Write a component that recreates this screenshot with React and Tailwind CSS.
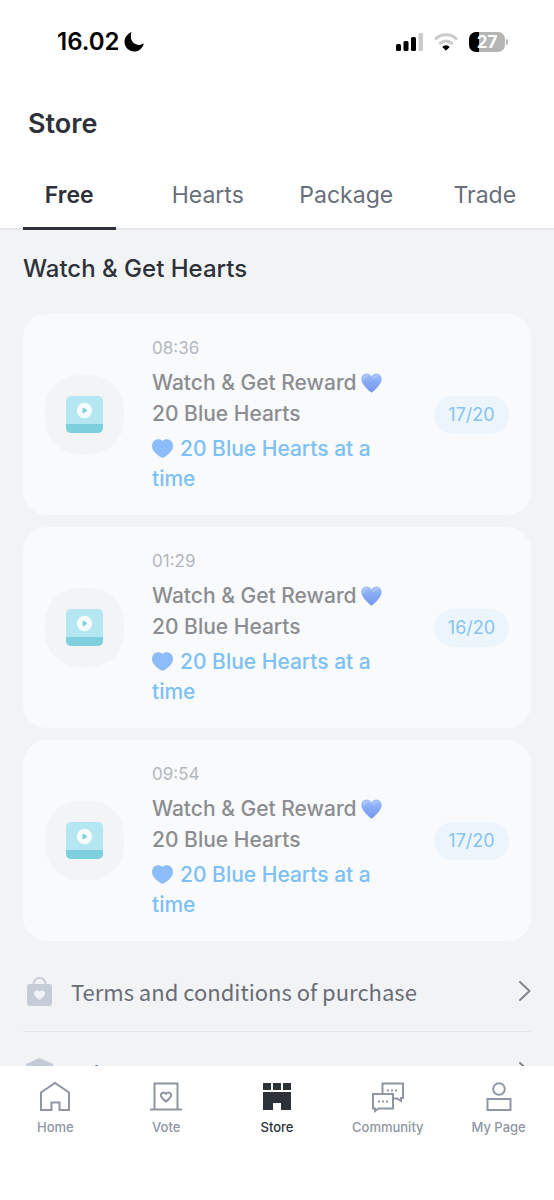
import { useState } from "react"

const TABS = ["Free", "Hearts", "Package", "Trade"]

const REWARDS = [
  { id: 1, time: "08:36", count: "17/20" },
  { id: 2, time: "01:29", count: "16/20" },
  { id: 3, time: "09:54", count: "17/20" },
]

const StatusBar = () => (
  <div className="flex items-center justify-between pt-7 pr-[46px] pl-[57px]">
    <div className="flex items-center gap-1">
      <span className="text-[24px] leading-[28px] font-semibold text-black">16.02</span>
      <svg width="20" height="20" viewBox="0 0 20 20" fill="#000">
        <path d="M7.3.4C6 5.2 7.3 9.600 10.800 11.800c2.600 1.600 5.600 1.500 8-.1.500-.300 1 .100.800.700C18.200 16.500 14.600 19.500 10.300 19.500 4.900 19.500.5 15.200.5 9.800.5 5.700 3 2.200 6.500.400 7-.100 7.500-.100 7.300.400Z" />
      </svg>
    </div>
    <div className="flex items-center gap-[11px]">
      <svg width="27" height="18" viewBox="0 0 27 18">
        <rect x="0" y="11" width="5" height="7" rx="1.500" fill="#000" />
        <rect x="7.500" y="8" width="5" height="10" rx="1.500" fill="#000" />
        <rect x="15" y="4" width="5" height="14" rx="1.500" fill="#000" />
        <rect x="22.500" y="0" width="4.500" height="18" rx="1.500" fill="#cbcbcb" />
      </svg>
      <svg width="24" height="18" viewBox="0 0 24 18" fill="none">
        <path d="M2 5.600C7.500.600 16.500.600 22 5.600" stroke="#cbcbcb" strokeWidth="3" strokeLinecap="round" />
        <path d="M6.300 10.200c3.300-3 8.100-3 11.400 0" stroke="#cbcbcb" strokeWidth="3" strokeLinecap="round" />
        <path d="M8.800 14c1.800-1.600 4.600-1.600 6.400 0L12 17.200Z" fill="#000" stroke="#000" strokeLinejoin="round" />
      </svg>
      <div className="flex items-center gap-px">
        <div className="flex h-5 w-9 items-center justify-center rounded-[7px] bg-linear-to-r from-black from-27% to-[#b5b5b5] to-27% text-[17px] leading-5 font-bold text-white">
          27
        </div>
        <div className="h-[6px] w-[2px] rounded-r bg-[#b5b5b5]" />
      </div>
    </div>
  </div>
)

const VideoIcon = () => (
  <svg width="37" height="37" viewBox="0 0 37 37">
    <rect width="37" height="37" rx="5" fill="#b4e7f1" />
    <path d="M0 28h37v4a5 5 0 0 1-5 5H5a5 5 0 0 1-5-5Z" fill="#7fd0de" />
    <circle cx="18.500" cy="14.500" r="7.700" fill="#f6fbfc" />
    <path d="M17 12v5l4-2.500Z" fill="#7fd0de" stroke="#7fd0de" strokeLinejoin="round" />
  </svg>
)

// glossy heart that ends the reward title
const GlossyHeart = () => (
  <svg className="ml-1 inline-block align-[-3px]" width="21" height="20" viewBox="0 0 21 20">
    <defs>
      <linearGradient id="gloss" x1="0" y1="0" x2="0" y2="1">
        <stop offset="0" stopColor="#a2bffa" />
        <stop offset="0.450" stopColor="#86aaf6" />
        <stop offset="1" stopColor="#7598ee" />
      </linearGradient>
    </defs>
    <path
      d="M10.500 3.800C9 .600 5.700-.200 3.300 1 .500 2.400-.300 5.800 1 8.900c1.700 4 5.700 7.800 9.500 10.900 3.800-3.100 7.800-6.900 9.500-10.900 1.300-3.100.500-6.500-2.300-7.900-2.400-1.200-5.700-.400-7.200 2.800Z"
      fill="url(#gloss)"
    />
    <path d="M2.600 6.500c0-2.600 1.800-4 4-3.700M12.600 5.300c.800-2 2.300-2.800 4.200-2.300" stroke="#b3cbfc" strokeWidth="1.500" fill="none" strokeLinecap="round" />
  </svg>
)

const FlatHeart = () => (
  <svg className="mr-[7px] inline-block align-[-2px]" width="21" height="19" viewBox="0 0 21 19">
    <path
      d="M10.500 1.900C8.600-.300 4.700-.500 2.200 1.700-.400 4-.600 8.600 1.400 11.600c1.700 2.500 4.200 4.700 7 6.500 1.400.900 2.800.900 4.200 0 2.800-1.800 5.300-4 7-6.500 2-3 1.800-7.600-.8-9.900C16.300-.500 12.400-.300 10.500 1.900Z"
      fill="#8cbcf9"
    />
  </svg>
)

const RewardCard = ({ time, count }) => (
  <li className="flex items-center rounded-[24px] bg-[#f9fafb] px-[22px] py-[21px]">
    <div className="flex size-[79px] shrink-0 items-center justify-center rounded-[34px] bg-[#f3f4f5]">
      <VideoIcon />
    </div>
    <div className="ml-7 w-[240px]">
      <p className="text-[17px] leading-[26px] text-[#b3b8c0]">{time}</p>
      <p className="mt-[6px] text-[21px] leading-[31px] font-medium text-[#8b8d92]">
        Watch &amp; Get Reward
        <GlossyHeart />
        <br />
        20 Blue Hearts
      </p>
      <p className="mt-[5px] text-[21px] leading-[30px] font-medium text-[#7cc0f5]">
        <FlatHeart />
        20 Blue Hearts at a time
      </p>
    </div>
    <button className="ml-auto h-[38px] w-[75px] rounded-full bg-[#ecf5fc] text-[18px] text-[#87c3ef]">{count}</button>
  </li>
)

const Chevron = () => (
  <svg width="12" height="20" viewBox="0 0 12 20" fill="none">
    <path d="m1 1 9.500 9L1 19" stroke="#80858e" strokeWidth="2" strokeLinecap="round" strokeLinejoin="round" />
  </svg>
)

const BagIcon = () => (
  <svg width="25" height="29" viewBox="0 0 25 29">
    <path d="M6.500 9V7a6 6 0 0 1 12 0v2" fill="none" stroke="#c5cbd7" strokeWidth="1.800" />
    <rect y="7" width="25" height="22" rx="3" fill="#c5cbd7" />
    <path d="M12.500 14.500c-1.500-2-5.500-1.300-5.500 1.900 0 2.400 3 4.400 5.500 6.400 2.500-2 5.500-4 5.500-6.400 0-3.200-4-3.900-5.500-1.900Z" fill="#f2f3f5" />
  </svg>
)

const ShieldIcon = () => (
  <svg width="27" height="29" viewBox="0 0 27 29">
    <path d="M13.500 0 27 6v10c0 6-6 11-13.500 13C6 27 0 22 0 16V6Z" fill="#c5cbd7" />
  </svg>
)

const LinkRow = ({ icon, label }) => (
  <li className="border-b border-[#e3e5e9]">
    <a href="#" className="flex h-20 items-center">
      <span className="flex w-[33px] justify-center">{icon}</span>
      <span className="ml-[15px] flex-1 font-['Noto_Sans_CJK_KR','Noto_Sans_CJK_SC',sans-serif] text-[22px] leading-8 text-[#686d76]">
        {label}
      </span>
      <Chevron />
    </a>
  </li>
)

const HomeIcon = () => (
  <svg width="34" height="32" viewBox="0 0 34 32" fill="none" stroke="currentColor" strokeWidth="2">
    <path d="M3 11.500 17 2l14 9.500V29h-9.500v-7.500h-8V29H3Z" />
  </svg>
)

const VoteIcon = () => (
  <svg width="34" height="32" viewBox="0 0 34 32" fill="none" stroke="currentColor" strokeWidth="2">
    <path d="M5.500 28.500v-26h23v26M1 28.500h32" />
    <path d="M17 12.800c-2-2.300-5.200-1.200-5.200 1.500 0 2.200 2.700 4 5.200 6.200 2.500-2.200 5.200-4 5.200-6.200 0-2.700-3.200-3.800-5.200-1.500Z" />
  </svg>
)

const StoreIcon = () => (
  <svg width="34" height="32" viewBox="0 0 34 32" fill="currentColor">
    <path d="M3 2h8v7H3ZM13 2h8v7h-8ZM23 2h8v7h-8ZM3 11h28v18H21v-7h-8v7H3Z" />
  </svg>
)

const CommunityIcon = () => (
  <svg width="34" height="32" viewBox="0 0 34 32" fill="none" stroke="currentColor" strokeWidth="2">
    <path d="M11.500 12V2.500h20.500v14.500h-2v3l-4-2.500h-3" />
    <path d="M2 13h20v14.500H7.500L4 30v-2.500H2Z" />
    <path d="M7 20.500h2m2 0h2m2 0h2M16 9.500h2m2 0h2m2 0h2" />
  </svg>
)

const MyPageIcon = () => (
  <svg width="34" height="32" viewBox="0 0 34 32" fill="none" stroke="currentColor" strokeWidth="2">
    <circle cx="17" cy="8" r="5.800" />
    <path d="M5.500 18h23v11h-23Z" />
  </svg>
)

const NAV_ITEMS = [
  { label: "Home", Icon: HomeIcon },
  { label: "Vote", Icon: VoteIcon },
  { label: "Store", Icon: StoreIcon },
  { label: "Community", Icon: CommunityIcon },
  { label: "My Page", Icon: MyPageIcon },
]

const App = () => {
  const [activeTab, setActiveTab] = useState("Free")

  return (
    <div className="flex h-screen flex-col bg-[#f2f3f5] font-['Inter',sans-serif]">
      <header className="shrink-0 border-b-2 border-[#e6e7ec] bg-white">
        <StatusBar />
        <h1 className="mt-[50px] px-7 text-[27px] leading-9 font-semibold text-[#2d3139]">Store</h1>
        <nav className="mt-[18px] -mb-[2px] grid grid-cols-4">
          {TABS.map((tab) => (
            <button
              key={tab}
              onClick={() => setActiveTab(tab)}
              className={`mx-[23px] flex h-[70px] justify-center border-b-[3px] pt-[19px] text-[23px] leading-8 ${
                tab === activeTab ? "border-[#2d3139] font-semibold text-[#2d3139]" : "border-transparent text-[#686e79]"
              }`}
            >
              {tab}
            </button>
          ))}
        </nav>
      </header>

      <main className="min-h-0 flex-1 overflow-hidden px-[23px] pt-[23px]">
        <h2 className="text-[24px] leading-8 font-medium text-[#2d3139]">Watch &amp; Get Hearts</h2>
        <ul className="mt-[29px] flex flex-col gap-3">
          {REWARDS.map((reward) => (
            <RewardCard key={reward.id} time={reward.time} count={reward.count} />
          ))}
        </ul>
        <ul className="mt-[10px]">
          <LinkRow icon={<BagIcon />} label="Terms and conditions of purchase" />
          <LinkRow icon={<ShieldIcon />} label="Privacy" />
        </ul>
      </main>

      <nav className="grid h-[134px] shrink-0 grid-cols-5 items-start bg-white pt-[15px]">
        {NAV_ITEMS.map(({ label, Icon }) => (
          <a
            key={label}
            href="#"
            className={`flex flex-col items-center gap-1 text-[13px] leading-5 font-medium ${
              label === "Store" ? "text-[#2d3139]" : "text-[#8f96a3]"
            }`}
          >
            <Icon />
            {label}
          </a>
        ))}
      </nav>
    </div>
  )
}

export default App
